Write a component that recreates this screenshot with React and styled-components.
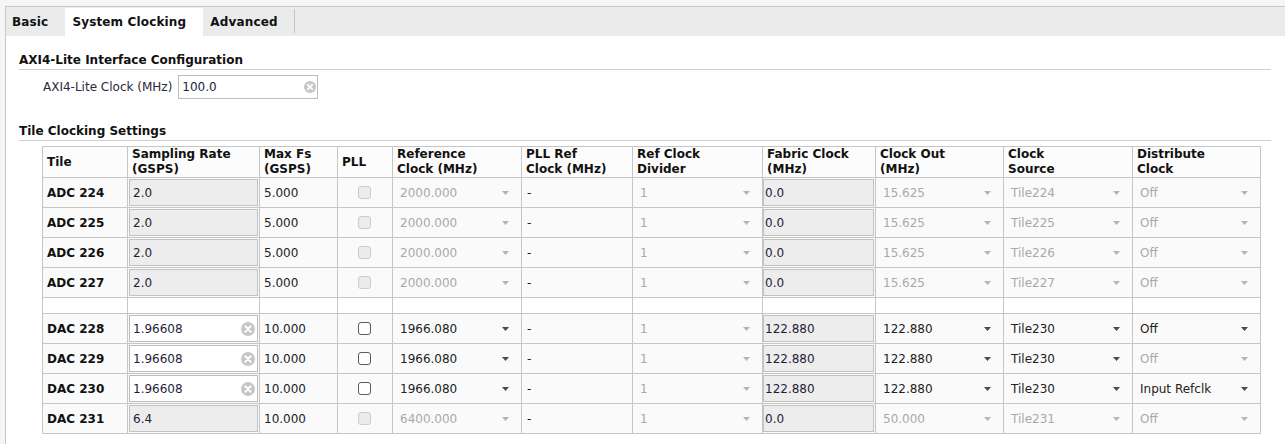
import React from "react";
import styled, { createGlobalStyle } from "styled-components";

const GlobalStyle = createGlobalStyle`
  html, body { margin: 0; padding: 0; background: #f5f5f5; }
  body { font-family: "DejaVu Sans", "Liberation Sans", sans-serif; font-size: 12px; color: #222; }
  * { box-sizing: border-box; }
`;

const Page = styled.div`
  width: 1285px;
  height: 444px;
  padding: 6px 0 0 5px;
  background: #f5f5f5;
  overflow: hidden;
`;

const Panel = styled.div`
  height: 100%;
  background: #fff;
  border-top: 1px solid #c8c8c8;
  border-left: 1px solid #c8c8c8;
  display: flex;
  flex-direction: column;
`;

const TabBar = styled.div`
  height: 29px;
  background: #ebebeb;
  display: flex;
  align-items: stretch;
  padding-top: 1px;
`;

const Tab = styled.div`
  position: relative;
  display: flex;
  align-items: center;
  padding: 0 17px 1px ${(p) => (p.$first ? 6 : 7)}px;
  font-weight: bold;
  color: #111;
  letter-spacing: 0.15px;
  background: ${(p) => (p.$active ? "#fff" : "transparent")};
  ${(p) =>
    p.$sep &&
    `&::after { content: ""; position: absolute; right: 0; top: 1px; height: 24px; width: 1px; background: #c4c4c4; }`}
`;

const Content = styled.div`
  padding: 16px 14px 0 13px;
`;

const SectionTitle = styled.div`
  font-weight: bold;
  color: #111;
  line-height: 16px;
  padding-bottom: 1px;
  border-bottom: 1px solid #cfcfcf;
  margin-top: ${(p) => p.$mt || 0}px;
`;

const FieldRow = styled.div`
  display: flex;
  align-items: center;
  gap: 6px;
  margin-top: 5px;
  padding-left: 24px;
`;

const FieldLabel = styled.span`
  color: #2a2a3a;
`;

const TextBox = styled.div`
  display: flex;
  align-items: center;
  width: ${(p) => p.$w || "auto"};
  height: ${(p) => p.$h || 24}px;
  border: 1px solid ${(p) => (p.$disabled ? "#c2c2c2" : "#bdbdbd")};
  background: ${(p) => (p.$disabled ? "#ededed" : "#fff")};
  padding: 0 ${(p) => p.$pr || 1}px 0 ${(p) => p.$pl || 3}px;
  color: #1e1e3a;
`;

const BoxText = styled.span`
  flex: 1;
`;

const TableWrap = styled.div`
  margin: 5px 0 0 23px;
  width: 1219px;
  display: grid;
  grid-template-columns: 84px 131px 77px 54px 128px 110px 129px 112px 127px 128px 127px;
  grid-template-rows: 30px repeat(4, 29px) 15px repeat(4, 29px);
  gap: 1px;
  padding: 1px;
  background: #c6c6c6;
`;

const HeadCell = styled.div`
  background: #fcfcfc;
  display: flex;
  align-items: center;
  padding-left: 4px;
  font-weight: bold;
  color: #111;
  line-height: 15px;
`;

const HeadLine = styled.div``;

const Cell = styled.div`
  background: ${(p) => (p.$blank ? "#fff" : "#fafafa")};
  display: flex;
  align-items: center;
  justify-content: ${(p) => (p.$center ? "center" : "flex-start")};
  padding-left: ${(p) => (p.$pad != null ? p.$pad : 4)}px;
  font-weight: ${(p) => (p.$bold ? "bold" : "normal")};
  color: ${(p) => (p.$bold ? "#111" : "#222")};
`;

const CellInput = styled(TextBox)`
  margin: 0 1px 0 ${(p) => p.$ml || 0}px;
  flex: 1;
`;

const Check = styled.span`
  width: 13px;
  height: 13px;
  margin-right: 2px;
  border-radius: 3px;
  border: 1px solid ${(p) => (p.$disabled ? "#cbcbcb" : "#5a5a5a")};
  background: ${(p) => (p.$disabled ? "#ececec" : "#fff")};
`;

const Drop = styled.div`
  flex: 1;
  display: flex;
  align-items: center;
  justify-content: space-between;
  padding: 0 12px 0 3px;
  color: ${(p) => (p.$disabled ? "#a9a9a9" : "#222")};
`;

const ClearIcon = ({ size = 14 }) => (
  <svg width={size} height={size} viewBox="0 0 14 14" style={{ flex: "none" }}>
    <circle cx="7" cy="7" r="7" fill="#c6c6c6" />
    <path d="M4.3 4.3 L9.7 9.7 M9.7 4.3 L4.3 9.7" stroke="#fff" strokeWidth="2" strokeLinecap="round" />
  </svg>
);

const Arrow = ({ disabled }) => (
  <svg width="7" height="4" viewBox="0 0 7 4" style={{ flex: "none" }}>
    <path d="M0 0 H7 L3.5 4 Z" fill={disabled ? "#b4b4b4" : "#4a4a4a"} />
  </svg>
);

const headers = [
  ["Tile"],
  ["Sampling Rate", "(GSPS)"],
  ["Max Fs", "(GSPS)"],
  ["PLL"],
  ["Reference", "Clock (MHz)"],
  ["PLL Ref", "Clock (MHz)"],
  ["Ref Clock", "Divider"],
  ["Fabric Clock", "(MHz)"],
  ["Clock Out", "(MHz)"],
  ["Clock", "Source"],
  ["Distribute", "Clock"],
];

const adc = (n) => ({
  name: `ADC ${n}`,
  sr: "2.0",
  srOn: false,
  max: "5.000",
  pllOn: false,
  ref: "2000.000",
  refOn: false,
  fab: "0.0",
  out: "15.625",
  outOn: false,
  src: `Tile${n}`,
  srcOn: false,
  dist: "Off",
  distOn: false,
});

const dac = (n, dist, distOn) => ({
  name: `DAC ${n}`,
  sr: "1.96608",
  srOn: true,
  max: "10.000",
  pllOn: true,
  ref: "1966.080",
  refOn: true,
  fab: "122.880",
  out: "122.880",
  outOn: true,
  src: "Tile230",
  srcOn: true,
  dist,
  distOn,
});

const adcRows = [224, 225, 226, 227].map(adc);
const dacRows = [
  dac(228, "Off", true),
  dac(229, "Off", false),
  dac(230, "Input Refclk", true),
  {
    name: "DAC 231",
    sr: "6.4",
    srOn: false,
    max: "10.000",
    pllOn: false,
    ref: "6400.000",
    refOn: false,
    fab: "0.0",
    out: "50.000",
    outOn: false,
    src: "Tile231",
    srcOn: false,
    dist: "Off",
    distOn: false,
  },
];

const DropCell = ({ value, on }) => (
  <Cell $pad={4}>
    <Drop $disabled={!on}>
      <span>{value}</span>
      <Arrow disabled={!on} />
    </Drop>
  </Cell>
);

const Row = ({ r }) => (
  <>
    <Cell $bold>{r.name}</Cell>
    <Cell $pad={0}>
      <CellInput $h={27} $disabled={!r.srOn} $ml={1} $pl={3} $pr={2}>
        <BoxText>{r.sr}</BoxText>
        {r.srOn && <ClearIcon size={14} />}
      </CellInput>
    </Cell>
    <Cell>{r.max}</Cell>
    <Cell $center $pad={0}>
      <Check $disabled={!r.pllOn} />
    </Cell>
    <DropCell value={r.ref} on={r.refOn} />
    <Cell $pad={5}>-</Cell>
    <DropCell value="1" on={false} />
    <Cell $pad={0}>
      <CellInput $h={27} $disabled $pl={1}>
        <BoxText>{r.fab}</BoxText>
      </CellInput>
    </Cell>
    <DropCell value={r.out} on={r.outOn} />
    <DropCell value={r.src} on={r.srcOn} />
    <DropCell value={r.dist} on={r.distOn} />
  </>
);

export default function App() {
  return (
    <Page>
      <GlobalStyle />
      <Panel>
        <TabBar>
          <Tab $first>Basic</Tab>
          <Tab $active>System Clocking</Tab>
          <Tab $sep>Advanced</Tab>
        </TabBar>
        <Content>
          <SectionTitle>AXI4-Lite Interface Configuration</SectionTitle>
          <FieldRow>
            <FieldLabel>AXI4-Lite Clock (MHz)</FieldLabel>
            <TextBox $w="140px" $h={24} $pl={3} $pr={1}>
              <BoxText>100.0</BoxText>
              <ClearIcon size={12} />
            </TextBox>
          </FieldRow>
          <SectionTitle $mt={24}>Tile Clocking Settings</SectionTitle>
          <TableWrap>
            {headers.map((h, i) => (
              <HeadCell key={i}>
                <div>
                  {h.map((l, j) => (
                    <HeadLine key={j}>{l}</HeadLine>
                  ))}
                </div>
              </HeadCell>
            ))}
            {adcRows.map((r) => (
              <Row key={r.name} r={r} />
            ))}
            {headers.map((_, i) => (
              <Cell key={`b${i}`} $blank />
            ))}
            {dacRows.map((r) => (
              <Row key={r.name} r={r} />
            ))}
          </TableWrap>
        </Content>
      </Panel>
    </Page>
  );
}
